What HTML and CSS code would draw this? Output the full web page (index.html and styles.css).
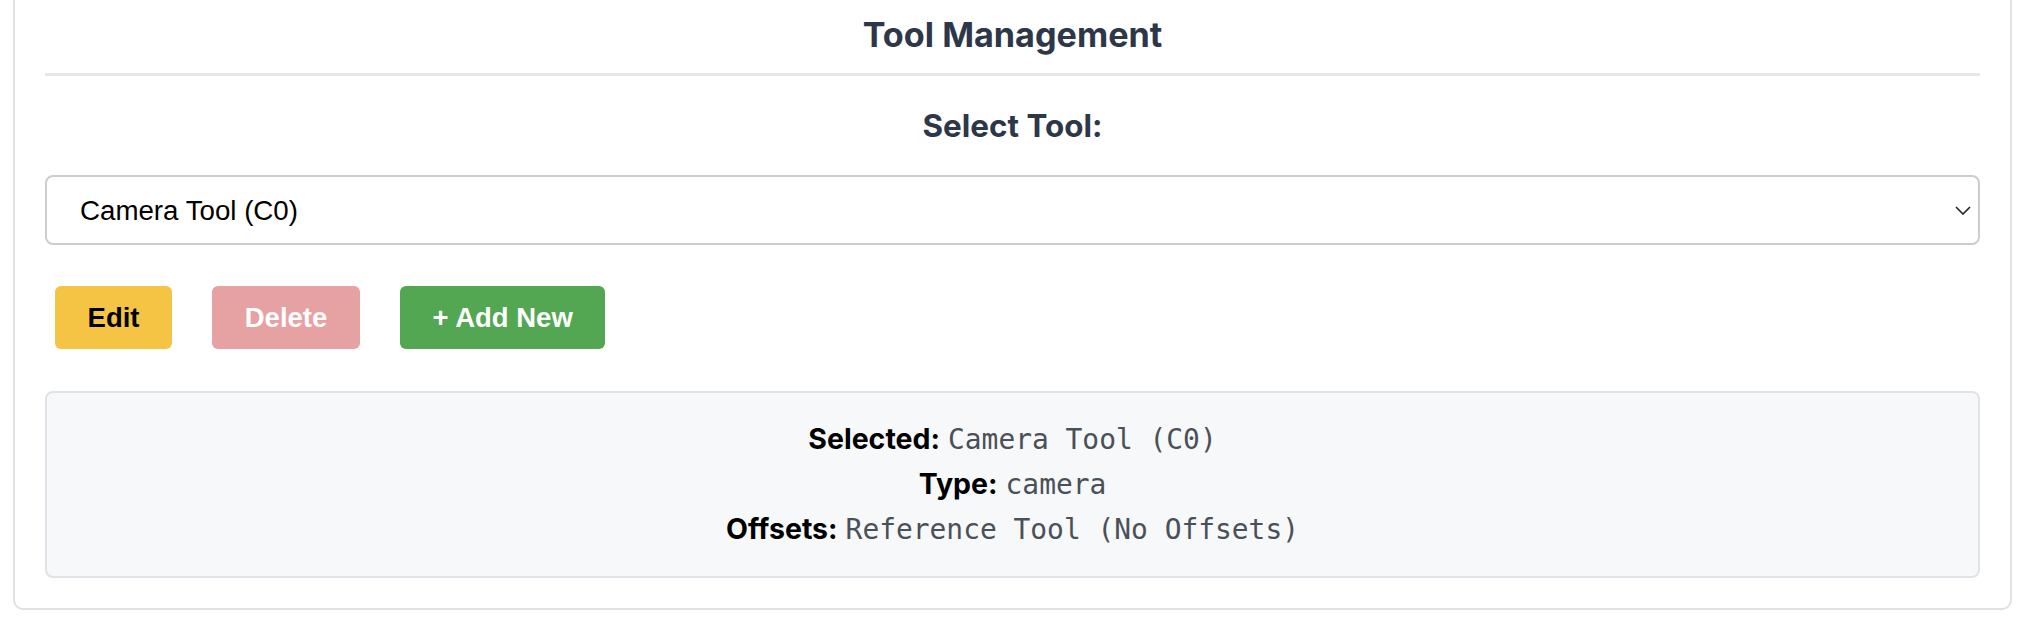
FILE: index.html
```html
<!DOCTYPE html>
<html lang="en">
<head>
<meta charset="utf-8">
<title>Tool Management</title>
<link rel="stylesheet" href="styles.css">
</head>
<body>
<div class="card">
  <h2 class="title">Tool Management</h2>
  <div class="field">
    <label class="field-label" for="tool">Select Tool:</label>
    <div class="select-wrap">
      <select id="tool" class="select">
        <option>Camera Tool (C0)</option>
      </select>
      <svg class="chevron" viewBox="0 0 16 9" aria-hidden="true"><polyline points="1,1 8,8 15,1"/></svg>
    </div>
  </div>
  <div class="actions">
    <button class="btn btn-edit">Edit</button>
    <button class="btn btn-delete" disabled>Delete</button>
    <button class="btn btn-add">+ Add New</button>
  </div>
  <div class="info">
    <div class="info-row"><strong class="info-label">Selected:</strong> <code class="info-value">Camera Tool (C0)</code></div>
    <div class="info-row"><strong class="info-label">Type:</strong> <code class="info-value">camera</code></div>
    <div class="info-row"><strong class="info-label">Offsets:</strong> <code class="info-value">Reference Tool (No Offsets)</code></div>
  </div>
</div>
</body>
</html>
```

FILE: styles.css
```css
* { box-sizing: border-box; }

body {
  margin: 0;
  background: #ffffff;
  font-family: Inter, "Liberation Sans", sans-serif;
}

.card {
  margin: 0 18px 0 13px;
  border: 2px solid #e1e1e3;
  border-top: none;
  border-radius: 0 0 10px 10px;
  padding: 15px 30px 30px;
  background: #ffffff;
}

.title {
  margin: 0;
  padding-bottom: 18px;
  border-bottom: 3px solid #e6e7ec;
  font-family: Inter, "Liberation Sans", sans-serif;
  font-weight: 700;
  font-size: 34.2px;
  line-height: 40px;
  color: #2d3748;
  text-align: center;
}

.field {
  display: flex;
  flex-direction: column;
}

.field-label {
  margin-top: 32px;
  font-family: Inter, "Liberation Sans", sans-serif;
  font-weight: 700;
  font-size: 31.4px;
  line-height: 36px;
  color: #2d3748;
  text-align: center;
}

.select-wrap {
  position: relative;
  margin-top: 31px;
}

.select {
  display: block;
  width: 100%;
  height: 70px;
  -webkit-appearance: none;
  appearance: none;
  border: 2px solid #cdcdcd;
  border-radius: 8px;
  background: #ffffff;
  padding: 0 33px;
  font-family: "Liberation Sans", Arial, sans-serif;
  font-size: 27.7px;
  color: #000000;
}

.chevron {
  position: absolute;
  right: 9px;
  top: 31px;
  width: 16px;
  height: 9px;
  fill: none;
  stroke: #222222;
  stroke-width: 1.6;
  pointer-events: none;
}

.actions {
  display: flex;
  gap: 40px;
  margin-top: 41px;
  padding-left: 10px;
}

.btn {
  border: none;
  border-radius: 6px;
  padding: 16px 32.6px;
  font-family: "Liberation Sans", Arial, sans-serif;
  font-weight: 700;
  font-size: 27.5px;
  line-height: 31px;
  cursor: pointer;
}

.btn-edit {
  background: #f6c445;
  color: #000000;
}

.btn-delete {
  background: #e6a1a3;
  color: #ffffff;
}

.btn-add {
  background: #53a652;
  color: #ffffff;
}

.info {
  margin-top: 42px;
  background: #f7f8fa;
  border: 2px solid #e0e2e7;
  border-radius: 8px;
  padding: 24px;
  text-align: center;
  font-size: 28.5px;
  line-height: 44px;
}

.info-label {
  font-family: Inter, "Liberation Sans", sans-serif;
  font-weight: 700;
  color: #000000;
}

.info-value {
  font-family: "DejaVu Sans Mono", monospace;
  font-size: 27.9px;
  color: #495057;
}
```
